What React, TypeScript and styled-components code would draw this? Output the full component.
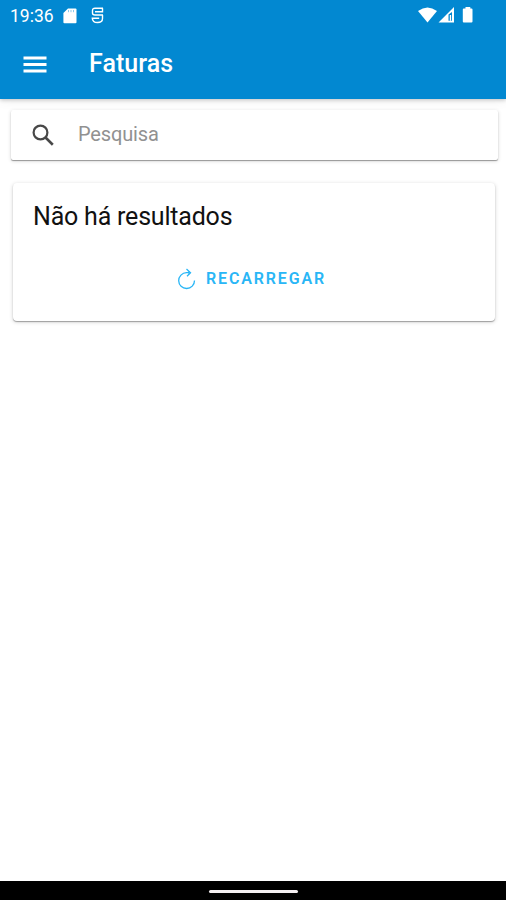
import React from "react";
import styled, { createGlobalStyle } from "styled-components";

const GlobalStyle = createGlobalStyle`
  * { box-sizing: border-box; }
  body { margin: 0; background: #fff; font-family: Roboto, "Noto Sans", sans-serif; }
`;

const Screen = styled.div`
  height: 900px;
  display: flex;
  flex-direction: column;
  background: #fff;
`;

const Header = styled.header`
  height: 99px;
  flex: none;
  background: #0288d1;
  color: #fff;
  box-shadow: 0 1px 4px rgba(0, 0, 0, 0.22), 0 3px 10px rgba(0, 0, 0, 0.05);
`;

const StatusBar = styled.div`
  height: 31px;
  display: flex;
  align-items: center;
  padding: 0 32px 0 10px;
`;

const Clock = styled.span`
  width: 53px;
  font-size: 17.5px;
  line-height: 20px;
  padding-top: 1px;
`;

const StatusIcons = styled.div<{ $end?: boolean }>`
  display: flex;
  align-items: center;
  gap: ${(p) => (p.$end ? "0" : "14px")};
  margin-left: ${(p) => (p.$end ? "auto" : "0")};
  svg { display: block; }
`;

const Toolbar = styled.div`
  height: 66px;
  display: flex;
  align-items: center;
  padding-left: 23px;
`;

const MenuButton = styled.button`
  width: 66px;
  padding: 1px 0 0;
  border: 0;
  background: none;
  color: inherit;
  text-align: left;
  svg { display: block; }
`;

const Title = styled.h1`
  margin: 0;
  font-size: 25px;
  font-weight: 500;
  line-height: 30px;
  letter-spacing: 0.05px;
`;

const Content = styled.main`
  flex: 1;
  padding: 11px 8px 0 11px;
`;

const SearchBar = styled.label`
  height: 50px;
  display: flex;
  align-items: center;
  padding-left: 21px;
  border-radius: 2px;
  background: #fff;
  box-shadow: 0 1px 1px rgba(0, 0, 0, 0.36), 0 1px 4px rgba(0, 0, 0, 0.14);
  svg { display: block; flex: none; }
`;

const SearchInput = styled.input`
  flex: 1;
  min-width: 0;
  margin-left: 22px;
  padding: 0 0 2px;
  border: 0;
  outline: 0;
  background: none;
  font: 400 20px/24px Roboto, sans-serif;
  letter-spacing: -0.15px;
  &::placeholder { color: #919191; opacity: 1; }
`;

const Card = styled.section`
  height: 138px;
  margin: 23px 3px 0 2px;
  padding: 19px 20px 0;
  border-radius: 4px;
  background: #fff;
  box-shadow: 0 1px 1px rgba(0, 0, 0, 0.3), 0 1px 4px rgba(0, 0, 0, 0.18);
`;

const CardTitle = styled.h2`
  margin: 0;
  color: #111;
  font-size: 25px;
  font-weight: 400;
  line-height: 30px;
  letter-spacing: -0.2px;
`;

const ReloadButton = styled.button`
  display: flex;
  align-items: center;
  gap: 9px;
  height: 24px;
  margin: 35px 0 0 144px;
  padding: 0;
  border: 0;
  background: none;
  color: #29b6f6;
  font: 600 16px/20px Roboto, sans-serif;
  letter-spacing: 1.85px;
  white-space: nowrap;
  svg { display: block; }
`;

const NavigationBar = styled.footer`
  height: 19px;
  flex: none;
  display: flex;
  justify-content: center;
  padding-top: 9px;
  background: #000;
`;

const HomeHandle = styled.div`
  width: 89px;
  height: 3px;
  margin-left: 1px;
  border-radius: 1.5px;
  background: #f5f0f2;
`;

export default function App() {
  return (
    <>
      <GlobalStyle />
      <Screen>
        <Header>
          <StatusBar>
            <Clock>19:36</Clock>
            <StatusIcons>
              <svg width="14" height="16" viewBox="0 0 14 16">
                <path fill="#fff" d="M5 0.5h7.5a1 1 0 0 1 1 1v12.8a1 1 0 0 1-1 1H1.4a1 1 0 0 1-1-1V5z" />
                <path stroke="#0288d1" strokeOpacity=".45" strokeWidth="1" d="M5.5 2v2.2M8 2v2.2M10.5 2v2.2" />
              </svg>
              <svg width="13" height="17" viewBox="0 0 13 17" fill="none" stroke="#fff" strokeWidth="1.4">
                <path d="M12 1.2H4Q1.5 1.2 1.5 3.5V6Q1.5 8 4 8h8M11.5 8v3.5Q11.5 15.5 6.5 15.5 1.5 15.5 1.3 11.2h6.9" />
                <path d="M4 4.7h7.5V1.2" />
              </svg>
            </StatusIcons>
            <StatusIcons $end>
              <svg width="56" height="17" viewBox="0 0 56 17" fill="#fff">
                <path d="M0 4Q9.5-3 19 4L9.5 15.5z" />
                <path fillRule="evenodd" d="M20.5 15.5L36 0v15.5zM30.5 7.5v6.3h3.5V5z" />
                <path d="M31.8 8h1.3v5.8h-1.3z" />
                <path d="M47.5 0h4.8v1.5h1.2a1 1 0 0 1 1 1V14.5a1 1 0 0 1-1 1h-7.7a1 1 0 0 1-1-1V2.5a1 1 0 0 1 1-1h1.7z" />
              </svg>
            </StatusIcons>
          </StatusBar>
          <Toolbar>
            <MenuButton aria-label="Menu">
              <svg width="24" height="17" viewBox="0 0 24 17" fill="#fff">
                <path d="M.5.5h23v3H.5zM.5 7h23v3H.5zM.5 13.5h23v3H.5z" />
              </svg>
            </MenuButton>
            <Title>Faturas</Title>
          </Toolbar>
        </Header>
        <Content>
          <SearchBar>
            <svg width="24" height="24" viewBox="0 0 24 24" fill="none" stroke="#484848" strokeWidth="2.2">
              <circle cx="8.5" cy="9.5" r="6.9" />
              <path d="M13.5 14.5l7.3 7.2" strokeWidth="2.6" />
            </svg>
            <SearchInput placeholder="Pesquisa" />
          </SearchBar>
          <Card>
            <CardTitle>Não há resultados</CardTitle>
            <ReloadButton>
              <svg width="20" height="22" viewBox="0 0 20 22" fill="none" stroke="#29b6f6" strokeWidth="1.3">
                <path d="M12.5 4.7H9.5A7.9 7.9 0 1 0 17.5 12.5" />
                <path d="M9.5 1l4 3.7-3.5 3.5" />
                <path d="M10.8 2.2l2.7 2.5-2.2 2.2z" fill="#29b6f6" fillOpacity=".55" stroke="none" />
              </svg>
              RECARREGAR
            </ReloadButton>
          </Card>
        </Content>
        <NavigationBar>
          <HomeHandle />
        </NavigationBar>
      </Screen>
    </>
  );
}
